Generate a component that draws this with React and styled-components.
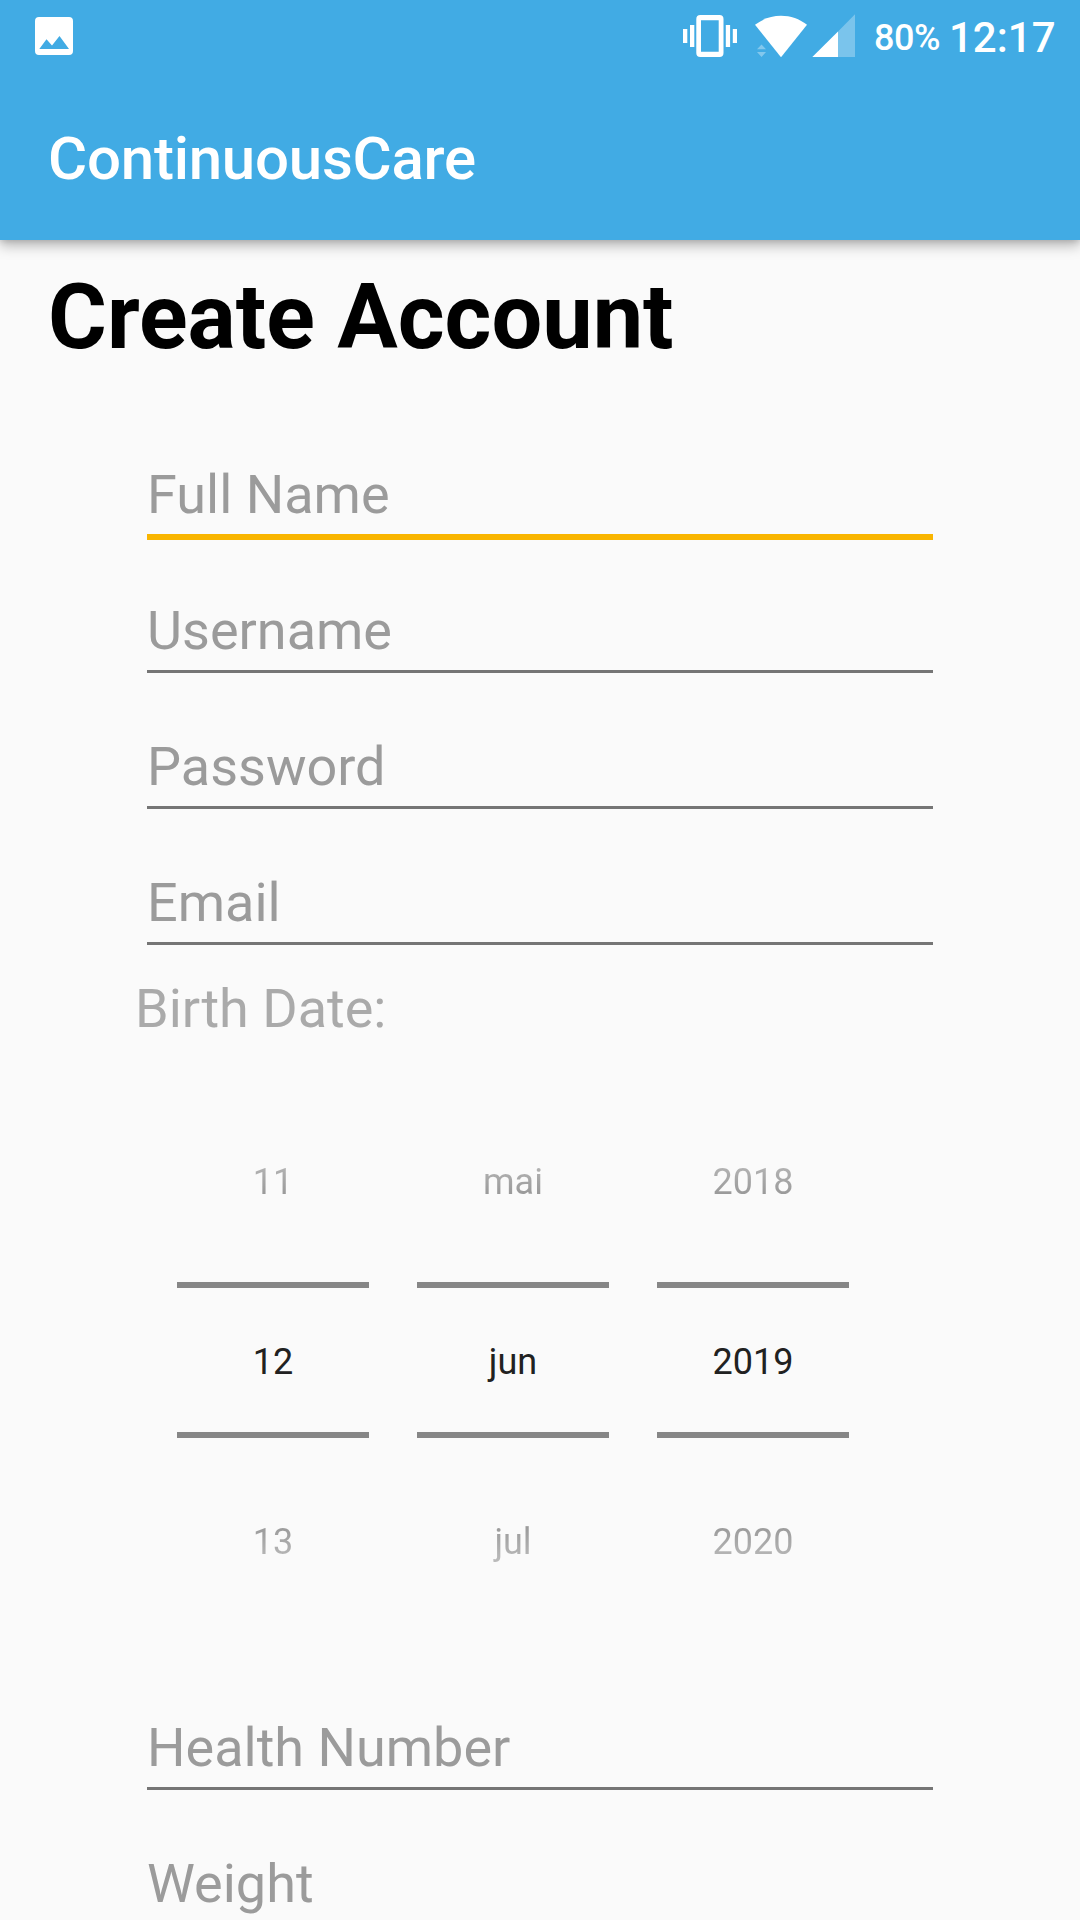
import React from "react";
import styled, { createGlobalStyle, css } from "styled-components";

const GlobalStyle = createGlobalStyle`
  *, *::before, *::after { box-sizing: border-box; }
  html, body { margin: 0; padding: 0; background: #fafafa; overflow: hidden; }
`;

const Screen = styled.div`
  width: 1080px;
  height: 1920px;
  overflow: hidden;
  display: flex;
  flex-direction: column;
  background: #fafafa;
  font-family: Roboto, "Noto Sans", sans-serif;
`;

const Header = styled.header`
  flex: none;
  height: 240px;
  background: #41abe4;
  color: #fff;
  box-shadow: 0 6px 12px rgba(0, 0, 0, 0.26), 0 1px 6px rgba(0, 0, 0, 0.14);
`;

const StatusBar = styled.div`
  height: 72px;
  padding: 0 25px 0 35px;
  display: flex;
  justify-content: space-between;
  align-items: center;
`;

const StatusGroup = styled.div`
  display: flex;
  align-items: center;
`;

const Icon = styled.svg`
  display: block;
  flex: none;
  margin-left: ${({ $gap = 0 }) => $gap}px;
`;

const Battery = styled.span`
  width: 65px;
  margin-left: 19px;
  padding-top: 3px;
  font-size: 36px;
  line-height: 42px;
  font-weight: 500;
  letter-spacing: -0.4px;
  white-space: nowrap;
`;

const Clock = styled.span`
  width: 106px;
  margin-left: 10px;
  padding-top: 3px;
  font-size: 42px;
  line-height: 48px;
  font-weight: 500;
  white-space: nowrap;
`;

const AppTitle = styled.div`
  padding: 50px 48px 0;
  font-size: 60px;
  line-height: 74px;
  font-weight: 500;
  letter-spacing: -0.24px;
`;

const Heading = styled.h1`
  flex: none;
  margin: 0;
  padding: 28px 48px 0;
  height: 197px;
  font-size: 90px;
  line-height: 100px;
  font-weight: 700;
  color: #000;
`;

const Form = styled.form`
  flex: none;
  width: 810px;
  margin: 0 auto;
  display: flex;
  flex-direction: column;
`;

const Field = styled.label`
  display: flex;
  flex-direction: column;
  flex: none;
  height: 136px;
  padding: 26px 12px 0;
`;

const Input = styled.input`
  width: 100%;
  height: 64px;
  margin: 0 0 7px;
  padding: 0;
  border: 0;
  outline: 0;
  background: transparent;
  font: 400 54px/64px Roboto, "Noto Sans", sans-serif;
  color: #212121;
  &::placeholder {
    color: #9b9b9b;
    opacity: 1;
  }
`;

const Underline = styled.span`
  height: ${({ $active }) => ($active ? 6 : 3)}px;
  background: ${({ $active }) => ($active ? "#f9b500" : "#757575")};
`;

const Label = styled.div`
  height: 64px;
  margin-top: -4px;
  font-size: 54px;
  line-height: 64px;
  color: #aaaaaa;
`;

const DatePicker = styled.div`
  display: flex;
  gap: 48px;
  height: 540px;
  margin: 49px 42px 60px;
`;

const Wheel = styled.div`
  width: 192px;
  display: flex;
  flex-direction: column;
  align-items: stretch;
  text-align: center;
  font-size: 36px;
  color: #212121;
`;

const fade = css`
  color: transparent;
  background-clip: text;
  -webkit-background-clip: text;
`;

const Previous = styled.div`
  height: 192px;
  padding-top: 71px;
  line-height: 42px;
  ${fade}
  background-image: linear-gradient(to bottom, #fafafa 0, #8b8b8b 120px);
`;

const Selected = styled.div`
  height: 156px;
  border-top: 6px solid #868686;
  border-bottom: 6px solid #868686;
  padding-top: 49px;
  line-height: 50px;
`;

const Next = styled.div`
  height: 192px;
  padding-top: 83px;
  line-height: 42px;
  ${fade}
  background-image: linear-gradient(to top, #fafafa 0, #8b8b8b 120px);
`;

function ImageIcon() {
  return (
    <Icon width="38" height="38" viewBox="0 0 38 38">
      <path
        fill="#fff"
        fillRule="evenodd"
        d="M4 0h30a4 4 0 0 1 4 4v30a4 4 0 0 1-4 4H4a4 4 0 0 1-4-4V4a4 4 0 0 1 4-4ZM4.300 32h29.700L24.500 19l-7.500 9.500-5.500-6.300Z"
      />
    </Icon>
  );
}

function VibrateIcon() {
  return (
    <Icon width="54" height="44" viewBox="0 0 54 44" fill="#fff">
      <path d="M0 15h4.300v14H0zM7 11h4.300v22H7zM42.800 11h4.300v22h-4.300zM49.800 15H54v14h-4.200z" />
      <path
        fillRule="evenodd"
        d="M17.300 1h19.200a4 4 0 0 1 4 4v34a4 4 0 0 1-4 4H17.300a4 4 0 0 1-4-4V5a4 4 0 0 1 4-4ZM18 6.300v31.500h17.700V6.300Z"
      />
    </Icon>
  );
}

function WifiIcon() {
  return (
    <Icon $gap={18} width="52" height="44" viewBox="0 0 52 44" fill="#fff">
      <path d="M26 43.200 0 10.800C7.500 5 16.400 1.800 26 1.800S44.500 5 52 10.800Z" />
      <path fillOpacity="0.35" d="M2 35.200h9L6.500 30.500ZM2 38h9l-4.500 5Z" />
    </Icon>
  );
}

function SignalIcon() {
  return (
    <Icon $gap={5} width="43" height="44" viewBox="0 0 43 44" fill="#fff">
      <path fillOpacity="0.3" d="M26 17.500 43 .3V43H26Z" />
      <path d="M.3 43 26 17.500V43Z" />
    </Icon>
  );
}

function TextField({ label, active, type = "text" }) {
  return (
    <Field>
      <Input type={type} placeholder={label} />
      <Underline $active={active} />
    </Field>
  );
}

const wheels = [
  ["11", "12", "13"],
  ["mai", "jun", "jul"],
  ["2018", "2019", "2020"],
];

export default function App() {
  return (
    <Screen>
      <GlobalStyle />
      <Header>
        <StatusBar>
          <ImageIcon />
          <StatusGroup>
            <VibrateIcon />
            <WifiIcon />
            <SignalIcon />
            <Battery>80%</Battery>
            <Clock>12:17</Clock>
          </StatusGroup>
        </StatusBar>
        <AppTitle>ContinuousCare</AppTitle>
      </Header>
      <Heading>Create Account</Heading>
      <Form>
        <TextField label="Full Name" active />
        <TextField label="Username" />
        <TextField label="Password" type="password" />
        <TextField label="Email" />
        <Label>Birth Date:</Label>
        <DatePicker>
          {wheels.map(([previous, selected, next]) => (
            <Wheel key={selected}>
              <Previous>{previous}</Previous>
              <Selected>{selected}</Selected>
              <Next>{next}</Next>
            </Wheel>
          ))}
        </DatePicker>
        <TextField label="Health Number" />
        <TextField label="Weight" />
      </Form>
    </Screen>
  );
}
